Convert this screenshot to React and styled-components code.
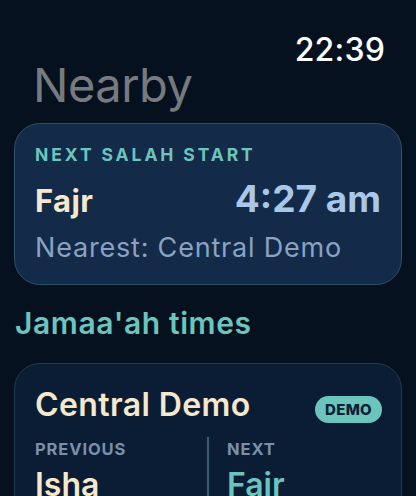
import React from 'react'
import styled, { createGlobalStyle } from 'styled-components'

const GlobalStyle = createGlobalStyle`
  html, body {
    margin: 0;
    padding: 0;
    background: #06111f;
  }
  body {
    font-family: Inter, "Noto Sans", "Liberation Sans", sans-serif;
    -webkit-font-smoothing: antialiased;
  }
`

const Screen = styled.div`
  width: 416px;
  height: 496px;
  overflow: hidden;
  background: #06111f;
  padding: 0 14px;
  box-sizing: border-box;
  display: flex;
  flex-direction: column;
`

const StatusBar = styled.div`
  display: flex;
  justify-content: flex-end;
  padding: 34px 17px 0 0;
`

const Clock = styled.span`
  font-size: 32px;
  line-height: 1;
  font-weight: 500;
  color: #ffffff;
  letter-spacing: 0.2px;
`

const Title = styled.h1`
  margin: -5px 0 0 19px;
  font-size: 47px;
  line-height: 1;
  font-weight: 400;
  color: #777a7e;
  letter-spacing: -0.5px;
`

const Card = styled.div`
  border-radius: 26px;
  border: 1.5px solid ${p => (p.$raised ? '#2c5263' : '#1f3c50')};
  background: ${p => (p.$raised ? '#132a48' : '#0b1d35')};
  padding: ${p => p.$pad || '22px 20px 20px 20px'};
  margin-top: ${p => p.$top || 0}px;
  display: flex;
  flex-direction: column;
`

const Eyebrow = styled.div`
  font-size: 17.5px;
  line-height: 1;
  font-weight: 700;
  letter-spacing: 2.9px;
  color: #6cc5bd;
`

const SalahRow = styled.div`
  display: flex;
  justify-content: space-between;
  align-items: baseline;
  margin-top: 16px;
`

const SalahName = styled.span`
  font-size: 31px;
  line-height: 1;
  font-weight: 700;
  color: ${p => p.$color || '#f5e8cc'};
  letter-spacing: 0.4px;
`

const SalahTime = styled.span`
  font-size: 37px;
  line-height: 1;
  font-weight: 700;
  color: #a9c7e8;
`

const Nearest = styled.div`
  margin-top: 16px;
  font-size: 27px;
  line-height: 1.1;
  font-weight: 400;
  color: #8aa3c2;
  letter-spacing: 0.8px;
`

const Section = styled.h2`
  margin: 23px 0 0 1px;
  font-size: 30px;
  line-height: 1;
  font-weight: 600;
  color: #6cc5bd;
  letter-spacing: 0.6px;
`

const MosqueHead = styled.div`
  display: flex;
  justify-content: space-between;
  align-items: flex-start;
`

const MosqueName = styled.span`
  font-size: 32px;
  line-height: 1;
  font-weight: 600;
  color: #f5e8cc;
  letter-spacing: 0.4px;
`

const Badge = styled.span`
  margin: 7px -1px 0 0;
  background: #6cc5bd;
  color: #0d2035;
  font-size: 15px;
  font-weight: 800;
  letter-spacing: 0.3px;
  border-radius: 14px;
  padding: 5px 10px;
  line-height: 17px;
`

const Split = styled.div`
  display: grid;
  grid-template-columns: 1fr 2px 1fr;
  column-gap: 18px;
  margin-top: 14px;
`

const Col = styled.div`
  display: flex;
  flex-direction: column;
  padding-top: 4px;
`

const Divider = styled.div`
  background: #3d5a6e;
  min-height: 80px;
`

const Label = styled.span`
  font-size: 16.5px;
  line-height: 1;
  font-weight: 700;
  letter-spacing: 0.9px;
  color: #7990ad;
`

const PrayerName = styled.span`
  margin-top: 11px;
  font-size: 32px;
  line-height: 1;
  font-weight: 600;
  color: ${p => p.$color || '#f5e8cc'};
`

export default function App() {
  return (
    <>
      <GlobalStyle />
      <Screen>
        <StatusBar>
          <Clock>22:39</Clock>
        </StatusBar>
        <Title>Nearby</Title>
        <Card $raised $top={15} $pad="22px 20px 22px 20px">
          <Eyebrow>NEXT SALAH START</Eyebrow>
          <SalahRow>
            <SalahName>Fajr</SalahName>
            <SalahTime>4:27 am</SalahTime>
          </SalahRow>
          <Nearest>Nearest: Central Demo</Nearest>
        </Card>
        <Section>Jamaa'ah times</Section>
        <Card $top={25} $pad="25px 20px 20px 20px">
          <MosqueHead>
            <MosqueName>Central Demo</MosqueName>
            <Badge>DEMO</Badge>
          </MosqueHead>
          <Split>
            <Col>
              <Label>PREVIOUS</Label>
              <PrayerName>Isha</PrayerName>
            </Col>
            <Divider />
            <Col>
              <Label>NEXT</Label>
              <PrayerName $color="#6cc5bd">Fajr</PrayerName>
            </Col>
          </Split>
        </Card>
      </Screen>
    </>
  )
}
